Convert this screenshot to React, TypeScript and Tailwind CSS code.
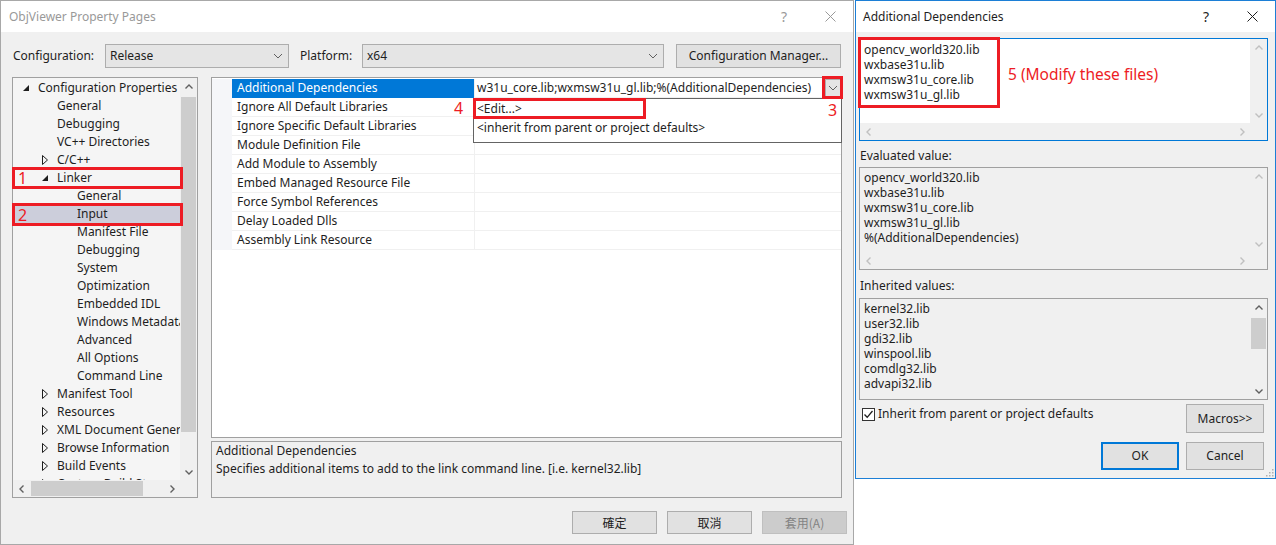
import React from 'react';

type Dir = 'up' | 'down' | 'left' | 'right';

const chevronPaths: Record<Dir, string> = {
  up: 'M1.5 6.5 L5 3 L8.5 6.5',
  down: 'M1.5 3.5 L5 7 L8.5 3.5',
  left: 'M6.5 1.5 L3 5 L6.5 8.5',
  right: 'M3.5 1.5 L7 5 L3.5 8.5',
};

const Chevron = ({ dir, className = '' }: { dir: Dir; className?: string }) => (
  <svg width="10" height="10" viewBox="0 0 10 10" className={className}>
    <path d={chevronPaths[dir]} fill="none" stroke="currentColor" strokeWidth="1.4" />
  </svg>
);

const ComboArrow = () => (
  <svg width="10" height="6" viewBox="0 0 10 6" className="text-[#606060]">
    <path d="M1 1 L5 5 L9 1" fill="none" stroke="currentColor" strokeWidth="1" />
  </svg>
);

const CloseIcon = ({ className = '' }: { className?: string }) => (
  <svg width="11" height="11" viewBox="0 0 11 11" className={className}>
    <path d="M0.5 0.5 L10.5 10.5 M10.5 0.5 L0.5 10.5" fill="none" stroke="currentColor" strokeWidth="1" />
  </svg>
);

interface TreeItem {
  label: string;
  level: 0 | 1 | 2;
  exp?: 'open' | 'closed';
  selected?: boolean;
}

const treeItems: TreeItem[] = [
  { label: 'Configuration Properties', level: 0, exp: 'open' },
  { label: 'General', level: 1 },
  { label: 'Debugging', level: 1 },
  { label: 'VC++ Directories', level: 1 },
  { label: 'C/C++', level: 1, exp: 'closed' },
  { label: 'Linker', level: 1, exp: 'open' },
  { label: 'General', level: 2 },
  { label: 'Input', level: 2, selected: true },
  { label: 'Manifest File', level: 2 },
  { label: 'Debugging', level: 2 },
  { label: 'System', level: 2 },
  { label: 'Optimization', level: 2 },
  { label: 'Embedded IDL', level: 2 },
  { label: 'Windows Metadata', level: 2 },
  { label: 'Advanced', level: 2 },
  { label: 'All Options', level: 2 },
  { label: 'Command Line', level: 2 },
  { label: 'Manifest Tool', level: 1, exp: 'closed' },
  { label: 'Resources', level: 1, exp: 'closed' },
  { label: 'XML Document Generator', level: 1, exp: 'closed' },
  { label: 'Browse Information', level: 1, exp: 'closed' },
  { label: 'Build Events', level: 1, exp: 'closed' },
  { label: 'Custom Build Step', level: 1, exp: 'closed' },
];

const propNames = [
  'Additional Dependencies',
  'Ignore All Default Libraries',
  'Ignore Specific Default Libraries',
  'Module Definition File',
  'Add Module to Assembly',
  'Embed Managed Resource File',
  'Force Symbol References',
  'Delay Loaded Dlls',
  'Assembly Link Resource',
];

const TreeRow = ({ item }: { item: TreeItem }) => {
  const indent = item.level === 0 ? 'w-[8px]' : item.level === 1 ? 'w-[27px]' : 'w-[47px]';
  return (
    <div className={`flex h-[18px] items-center whitespace-nowrap ${item.selected ? 'bg-[#cccedb]' : ''}`}>
      <div className={`${indent} shrink-0`} />
      <div className="flex w-[17px] shrink-0 items-center pl-[2px]">
        {item.exp === 'open' && (
          <svg width="6" height="6" viewBox="0 0 6 6">
            <polygon points="6,0 6,6 0,6" fill="#1e1e1e" />
          </svg>
        )}
        {item.exp === 'closed' && (
          <svg width="6" height="10" viewBox="0 0 6 10">
            <polygon points="0.5,0.5 5.5,5 0.5,9.5" fill="none" stroke="#1e1e1e" strokeWidth="1" />
          </svg>
        )}
      </div>
      <span>{item.label}</span>
    </div>
  );
};

const TreePanel = () => (
  <div className="relative flex h-[421px] w-[186px] flex-col border border-[#a0a0a0] bg-[#f5f5f5]">
    <div className="flex min-h-0 flex-1">
      <div className="flex-1 overflow-hidden pt-[1px]">
        {treeItems.map((item, i) => (
          <TreeRow key={i} item={item} />
        ))}
      </div>
      <div className="flex w-[17px] flex-col bg-[#f0f0f0]">
        <div className="flex h-[17px] items-center justify-center text-[#606060]">
          <Chevron dir="up" />
        </div>
        <div className="mx-[1px] mt-[2px] h-[335px] bg-[#cdcdcd]" />
        <div className="flex-1" />
        <div className="flex h-[17px] items-center justify-center text-[#606060]">
          <Chevron dir="down" />
        </div>
      </div>
    </div>
    <div className="flex h-[17px]">
      <div className="flex flex-1 items-center bg-[#f0f0f0]">
        <div className="flex h-[17px] w-[17px] items-center justify-center text-[#606060]">
          <Chevron dir="left" />
        </div>
        <div className="ml-[1px] h-[15px] w-[112px] bg-[#cdcdcd]" />
        <div className="flex-1" />
        <div className="flex h-[17px] w-[17px] items-center justify-center text-[#606060]">
          <Chevron dir="right" />
        </div>
      </div>
      <div className="w-[17px] bg-[#f0f0f0]" />
    </div>

    <div className="absolute left-[-1px] top-[89px] flex h-[22px] w-[171px] items-center border-[3px] border-[#ed1c24] pl-[3px] text-[16px] text-[#ed1c24]">
      1
    </div>
    <div className="absolute left-[-1px] top-[125px] flex h-[23px] w-[171px] items-center border-[3px] border-[#ed1c24] pl-[3px] text-[16px] text-[#ed1c24]">
      2
    </div>
  </div>
);

const PropertyGrid = () => (
  <div className="relative h-[361px] border border-[#a0a0a0] bg-white pt-[1px]">
    {propNames.map((name, i) => (
      <div key={name} className="flex h-[19px]">
        <div className="w-[20px] shrink-0 bg-[#f5f6f9]" />
        <div
          className={`w-[242px] shrink-0 border-b pl-[5px] leading-[18px] whitespace-nowrap ${
            i === 0 ? 'border-[#0078d7] bg-[#0078d7] text-white' : 'border-[#f0f0f0]'
          }`}
        >
          {name}
        </div>
        <div className="flex min-w-0 flex-1 border-b border-l border-[#f0f0f0]">
          {i === 0 && (
            <>
              <span className="min-w-0 flex-1 overflow-hidden whitespace-nowrap pl-[2px] leading-[18px]">
                w31u_core.lib;wxmsw31u_gl.lib;%(AdditionalDependencies)
              </span>
              <div className="flex h-[18px] w-[16px] shrink-0 items-center justify-center border border-[#adadad] bg-[#e5e5e5]">
                <ComboArrow />
              </div>
            </>
          )}
        </div>
      </div>
    ))}

    <div className="absolute left-[261px] top-[20px] h-[45px] w-[369px] border border-[#646464] bg-white">
      <div className="h-[19px] pl-[3px] leading-[19px]">&lt;Edit...&gt;</div>
      <div className="h-[19px] pl-[3px] leading-[19px]">&lt;inherit from parent or project defaults&gt;</div>
    </div>

    <div className="absolute left-[261px] top-[20px] h-[21px] w-[173px] border-[3px] border-[#ed1c24]" />
    <div className="absolute left-[242px] top-[20px] text-[16px] leading-[20px] text-[#ed1c24]">4</div>
    <div className="absolute left-[616px] top-[22px] text-[16px] leading-[20px] text-[#ed1c24]">3</div>
    <div className="absolute left-[610px] top-[-2px] h-[23px] w-[21px] border-[3px] border-[#ed1c24]" />
  </div>
);

const WinButton = ({ children, disabled = false }: { children: React.ReactNode; disabled?: boolean }) => (
  <div
    className={`flex h-[23px] w-[85px] items-center justify-center border font-['Noto_Sans_CJK_TC','Noto_Sans',sans-serif] ${
      disabled ? 'border-[#bfbfbf] bg-[#cccccc] text-[#838383]' : 'border-[#adadad] bg-[#e1e1e1] text-[#1e1e1e]'
    }`}
  >
    {children}
  </div>
);

const MainDialog = () => (
  <div className="flex h-[545px] w-[854px] shrink-0 flex-col border border-[#a8a8a8] bg-[#f0f0f0]">
    <div className="flex h-[31px] shrink-0 items-center bg-white">
      <span className="pl-[8px] text-[#999999]">ObjViewer Property Pages</span>
      <div className="ml-auto flex h-full w-[46px] items-center justify-center text-[14px] text-[#999999]">?</div>
      <div className="flex h-full w-[46px] items-center justify-center text-[#999999]">
        <CloseIcon />
      </div>
    </div>

    <div className="flex flex-1 flex-col pl-[11px] pr-[6px]">
      <div className="mt-[12px] flex h-[24px] items-center">
        <span className="w-[93px] pl-[1px]">Configuration:</span>
        <div className="flex h-[24px] w-[184px] items-center justify-between border border-[#adadad] bg-[#e5e5e5] pl-[4px] pr-[5px]">
          <span>Release</span>
          <ComboArrow />
        </div>
        <span className="w-[73px] pl-[11px]">Platform:</span>
        <div className="flex h-[24px] w-[302px] items-center justify-between border border-[#adadad] bg-[#e5e5e5] pl-[4px] pr-[5px]">
          <span>x64</span>
          <ComboArrow />
        </div>
        <div className="ml-[12px] flex h-[24px] w-[165px] items-center justify-center border border-[#adadad] bg-[#e1e1e1]">
          Configuration Manager...
        </div>
      </div>

      <div className="mt-[9px] flex gap-[13px]">
        <TreePanel />
        <div className="flex w-[631px] flex-col">
          <PropertyGrid />
          <div className="mt-[3px] h-[57px] border border-[#a0a0a0] bg-[#f0f0f0] pl-[4px]">
            <div>Additional Dependencies</div>
            <div>Specifies additional items to add to the link command line. [i.e. kernel32.lib]</div>
          </div>
        </div>
      </div>

      <div className="mt-[13px] flex justify-end gap-[10px]">
        <WinButton>確定</WinButton>
        <WinButton>取消</WinButton>
        <WinButton disabled>套用(A)</WinButton>
      </div>
    </div>
  </div>
);

const VScroll = ({ enabled, thumb = false }: { enabled: boolean; thumb?: boolean }) => {
  const c = enabled ? 'text-[#606060]' : 'text-[#c0c0c0]';
  return (
    <div className="flex w-[17px] shrink-0 flex-col bg-[#f0f0f0]">
      <div className={`flex h-[17px] items-center justify-center ${c}`}>
        <Chevron dir="up" />
      </div>
      {thumb && <div className="mx-[1px] mt-[2px] h-[31px] bg-[#cdcdcd]" />}
      <div className="flex-1" />
      <div className={`flex h-[17px] items-center justify-center ${c}`}>
        <Chevron dir="down" />
      </div>
    </div>
  );
};

const HScroll = () => (
  <div className="flex h-[17px] shrink-0">
    <div className="flex flex-1 items-center justify-between bg-[#f0f0f0] text-[#c0c0c0]">
      <div className="flex w-[17px] justify-center">
        <Chevron dir="left" />
      </div>
      <div className="flex w-[17px] justify-center">
        <Chevron dir="right" />
      </div>
    </div>
    <div className="w-[17px] bg-[#f0f0f0]" />
  </div>
);

const ListLines = ({ lines }: { lines: string[] }) => (
  <div className="flex-1 overflow-hidden pl-[4px] pt-[2px] leading-[15px]">
    {lines.map((l) => (
      <div key={l}>{l}</div>
    ))}
  </div>
);

const libs = ['opencv_world320.lib', 'wxbase31u.lib', 'wxmsw31u_core.lib', 'wxmsw31u_gl.lib'];

const EditDialog = () => (
  <div className="relative flex h-[479px] w-[421px] shrink-0 flex-col border border-[#1c7fd6] bg-[#f0f0f0]">
    <div className="flex h-[31px] shrink-0 items-center bg-white">
      <span className="pl-[7px]">Additional Dependencies</span>
      <div className="ml-auto flex h-full w-[46px] items-center justify-center text-[14px]">?</div>
      <div className="flex h-full w-[46px] items-center justify-center text-[#1e1e1e]">
        <CloseIcon />
      </div>
    </div>

    <div className="flex flex-1 flex-col pl-[3px] pr-[7px]">
      <div className="relative mt-[6px] flex h-[103px] flex-col border border-[#0078d7] bg-white">
        <div className="flex min-h-0 flex-1">
          <div className="flex-1 overflow-hidden pl-[4px] pt-[3px] leading-[15px]">
            {libs.map((l) => (
              <div key={l}>{l}</div>
            ))}
          </div>
          <VScroll enabled={false} />
        </div>
        <HScroll />
        <div className="absolute left-[-2px] top-[-2px] h-[71px] w-[142px] border-[3px] border-[#ed1c24]" />
        <div className="absolute left-[148px] top-[25px] text-[15.5px] leading-[20px] text-[#ed1c24]">
          5 (Modify these files)
        </div>
      </div>

      <div className="mt-[6px] pl-[1px]">Evaluated value:</div>
      <div className="mt-[2px] flex h-[103px] flex-col border border-[#a0a0a0] bg-[#f0f0f0]">
        <div className="flex min-h-0 flex-1">
          <ListLines lines={[...libs, '%(AdditionalDependencies)']} />
          <VScroll enabled={false} />
        </div>
        <HScroll />
      </div>

      <div className="mt-[7px] pl-[1px]">Inherited values:</div>
      <div className="mt-[3px] flex h-[102px] border border-[#a0a0a0] bg-[#f0f0f0]">
        <ListLines lines={['kernel32.lib', 'user32.lib', 'gdi32.lib', 'winspool.lib', 'comdlg32.lib', 'advapi32.lib']} />
        <VScroll enabled thumb />
      </div>

      <div className="mt-[4px] flex items-start justify-between pr-[4px]">
        <div className="mt-[1px] flex items-center gap-[3px] pl-[3px]">
          <div className="flex h-[13px] w-[13px] items-center justify-center border border-[#333333] bg-white">
            <svg width="11" height="11" viewBox="0 0 11 11">
              <path d="M1.5 5.5 L4.2 8.3 L9.5 2" fill="none" stroke="#1e1e1e" strokeWidth="1.3" />
            </svg>
          </div>
          <span>Inherit from parent or project defaults</span>
        </div>
        <div className="flex h-[29px] w-[78px] items-center justify-center border border-[#adadad] bg-[#e1e1e1]">
          Macros&gt;&gt;
        </div>
      </div>

      <div className="mt-[9px] flex justify-end gap-[7px] pr-[4px]">
        <div className="flex h-[28px] w-[78px] items-center justify-center border-2 border-[#0078d7] bg-[#e1e1e1]">
          OK
        </div>
        <div className="flex h-[28px] w-[78px] items-center justify-center border border-[#adadad] bg-[#e1e1e1]">
          Cancel
        </div>
      </div>
    </div>

    <svg width="10" height="10" viewBox="0 0 10 10" className="absolute bottom-[1px] right-[1px]">
      <g fill="#b0b0b0">
        <rect x="8" y="2" width="1.5" height="1.5" />
        <rect x="5" y="5" width="1.5" height="1.5" />
        <rect x="8" y="5" width="1.5" height="1.5" />
        <rect x="2" y="8" width="1.5" height="1.5" />
        <rect x="5" y="8" width="1.5" height="1.5" />
        <rect x="8" y="8" width="1.5" height="1.5" />
      </g>
    </svg>
  </div>
);

export default function App() {
  return (
    <div className="flex h-[545px] w-[1276px] overflow-hidden bg-white font-['Noto_Sans','Noto_Sans_CJK_TC',sans-serif] text-[12px] leading-[18px] text-[#1e1e1e]">
      <MainDialog />
      <div className="w-px shrink-0" />
      <EditDialog />
    </div>
  );
}
